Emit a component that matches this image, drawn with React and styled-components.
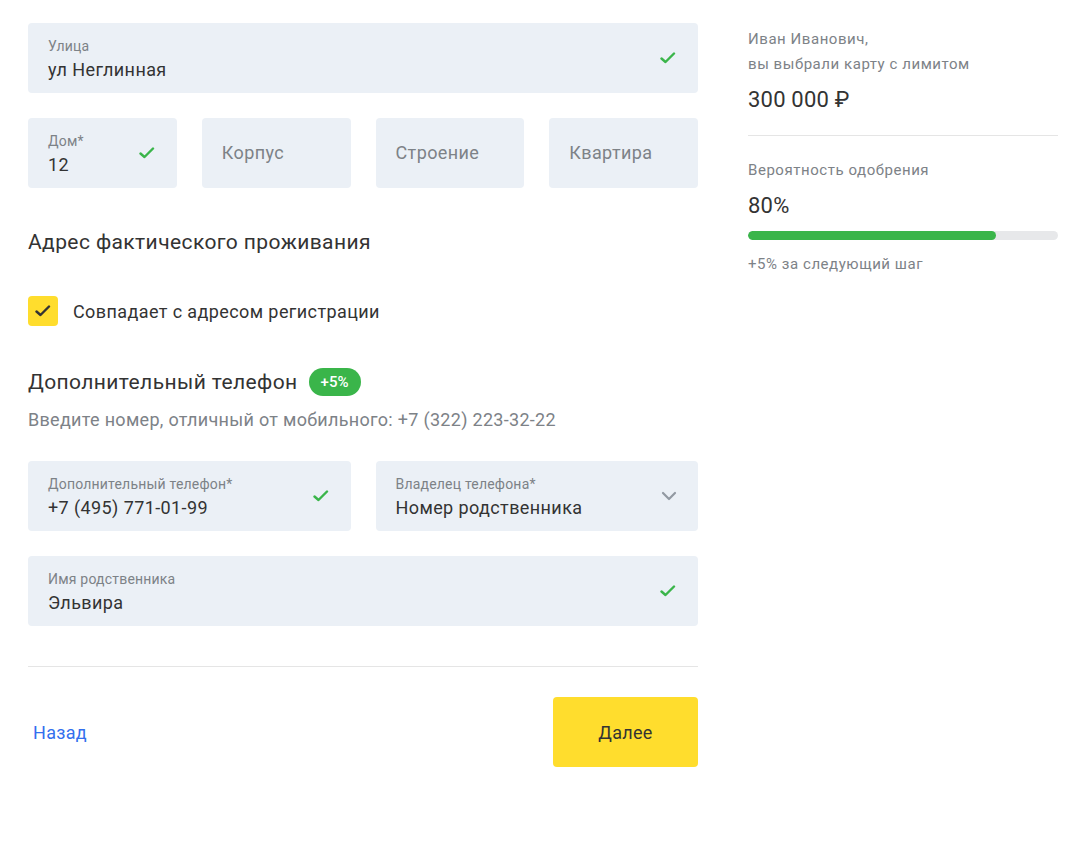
import React from 'react';
import styled, { createGlobalStyle } from 'styled-components';

const GlobalStyle = createGlobalStyle`
  body {
    margin: 0;
    background: #fff;
    font-family: Roboto, "Liberation Sans", sans-serif;
    color: #333;
  }
`

const Page = styled.div`
  display: flex;
  align-items: flex-start;
  gap: 50px;
  padding: 23px 0 0 28px;
`

const Main = styled.div`
  width: 670px;
  display: flex;
  flex-direction: column;
`

const Row = styled.div`
  display: grid;
  grid-template-columns: repeat(${p => p.$cols || 1}, minmax(0, 1fr));
  gap: 25px;
  margin-bottom: 25px;
`

const Field = styled.div`
  position: relative;
  height: 70px;
  border-radius: 4px;
  background: #ebf0f6;
  display: flex;
  flex-direction: column;
  justify-content: ${p => (p.$center ? 'center' : 'flex-start')};
  padding: ${p => (p.$center ? '0' : '14px')} 48px 0 20px;
  box-sizing: border-box;
`

const Label = styled.div`
  font-size: 14px;
  line-height: 18px;
  color: #7d8287;
  white-space: nowrap;
  letter-spacing: 0.2px;
`

const Value = styled.div`
  margin-top: 3px;
  font-size: 18px;
  line-height: 24px;
  color: #333;
  white-space: nowrap;
  letter-spacing: 0.4px;
`

const Placeholder = styled.div`
  font-size: 18px;
  line-height: 24px;
  color: #7d8287;
  letter-spacing: 0.4px;
  white-space: nowrap;
`

const FieldIcon = styled.span`
  position: absolute;
  right: ${p => p.$right || 22}px;
  top: 50%;
  transform: translateY(-50%);
  display: flex;
`

const Heading = styled.h2`
  margin: ${p => p.$margin || '0'};
  font-size: 21px;
  line-height: 26px;
  font-weight: 400;
  letter-spacing: 0.4px;
  color: #333;
  display: flex;
  align-items: center;
  gap: 11px;
`

const Badge = styled.span`
  display: inline-flex;
  align-items: center;
  justify-content: center;
  height: 28px;
  padding: 0 12px;
  border-radius: 14px;
  background: #3ab54a;
  color: #fff;
  font-size: 15px;
  font-weight: 500;
  letter-spacing: 0;
`

const CheckRow = styled.label`
  display: flex;
  align-items: center;
  gap: 15px;
  margin: 41px 0 42px;
  font-size: 18px;
  letter-spacing: 0.4px;
  color: #333;
`

const CheckBox = styled.span`
  width: 30px;
  height: 30px;
  border-radius: 4px;
  background: #ffdd2d;
  display: flex;
  align-items: center;
  justify-content: center;
`

const Hint = styled.p`
  margin: 13px 0 30px;
  font-size: 18px;
  line-height: 22px;
  letter-spacing: 0.3px;
  color: #7d8287;
`

const Divider = styled.hr`
  border: 0;
  border-top: 1px solid #e5e5e5;
  margin: ${p => p.$margin || '0'};
`

const Footer = styled.div`
  display: flex;
  justify-content: space-between;
  align-items: center;
`

const BackLink = styled.a`
  font-size: 18px;
  letter-spacing: 0.3px;
  color: #336fee;
  text-decoration: none;
  margin-left: 5px;
  cursor: pointer;
`

const NextButton = styled.button`
  width: 145px;
  height: 70px;
  border: 0;
  border-radius: 4px;
  background: #ffdd2d;
  font-family: inherit;
  font-size: 18px;
  letter-spacing: 0.3px;
  color: #333;
  cursor: pointer;
`

const Aside = styled.aside`
  width: 310px;
  padding-top: 4px;
`

const Muted = styled.div`
  font-size: 15px;
  line-height: 25px;
  color: #7d8287;
  letter-spacing: 0.55px;
`

const Big = styled.div`
  font-size: 22px;
  line-height: 26px;
  letter-spacing: 0.2px;
  color: #333;
  margin: ${p => p.$margin || '0'};
`

const Track = styled.div`
  height: 9px;
  border-radius: 5px;
  background: #e7e8ea;
  overflow: hidden;
  margin: 12px 0 12px;
`

const Fill = styled.div`
  height: 100%;
  border-radius: 5px;
  background: #3ab54a;
`

const Check = ({ color = '#3ab54a' }) => (
  <svg width="16" height="12" viewBox="0 0 16 12" fill="none">
    <path d="M1.5 6.5L5.5 10L14 1.5" stroke={color} strokeWidth="2.4" strokeLinecap="round" strokeLinejoin="round" />
  </svg>
)

const Chevron = () => (
  <svg width="16" height="10" viewBox="0 0 16 10" fill="none">
    <path d="M2 2L8 8L14 2" stroke="#9299a2" strokeWidth="2.2" strokeLinecap="round" strokeLinejoin="round" />
  </svg>
)

function InputField({ label, value, placeholder, icon, iconRight }) {
  return (
    <Field $center={!!placeholder}>
      {label && <Label>{label}</Label>}
      {value && <Value>{value}</Value>}
      {placeholder && <Placeholder>{placeholder}</Placeholder>}
      {icon && <FieldIcon $right={iconRight}>{icon}</FieldIcon>}
    </Field>
  )
}

export default function App() {
  const probability = 80

  return (
    <>
      <GlobalStyle />
      <Page>
        <Main>
          <Row>
            <InputField label='Улица' value='ул Неглинная' icon={<Check />} />
          </Row>
          <Row $cols={4}>
            <InputField label='Дом*' value='12' icon={<Check />} iconRight={22} />
            <InputField placeholder='Корпус' />
            <InputField placeholder='Строение' />
            <InputField placeholder='Квартира' />
          </Row>

          <Heading $margin='16px 0 0'>Адрес фактического проживания</Heading>

          <CheckRow>
            <CheckBox>
              <Check color='#333' />
            </CheckBox>
            Совпадает с адресом регистрации
          </CheckRow>

          <Heading>
            Дополнительный телефон
            <Badge>+5%</Badge>
          </Heading>
          <Hint>Введите номер, отличный от мобильного: +7 (322) 223-32-22</Hint>

          <Row $cols={2}>
            <InputField label='Дополнительный телефон*' value='+7 (495) 771-01-99' icon={<Check />} iconRight={22} />
            <InputField label='Владелец телефона*' value='Номер родственника' icon={<Chevron />} iconRight={21} />
          </Row>
          <Row>
            <InputField label='Имя родственника' value='Эльвира' icon={<Check />} />
          </Row>

          <Divider $margin='15px 0 30px' />

          <Footer>
            <BackLink>Назад</BackLink>
            <NextButton>Далее</NextButton>
          </Footer>
        </Main>

        <Aside>
          <Muted>Иван Иванович,</Muted>
          <Muted>вы выбрали карту с лимитом</Muted>
          <Big $margin='10px 0 0'>300 000 ₽</Big>
          <Divider $margin='22px 0 22px' />
          <Muted>Вероятность одобрения</Muted>
          <Big $margin='10px 0 0'>{probability}%</Big>
          <Track>
            <Fill style={{ width: `${probability}%` }} />
          </Track>
          <Muted>+5% за следующий шаг</Muted>
        </Aside>
      </Page>
    </>
  )
}
